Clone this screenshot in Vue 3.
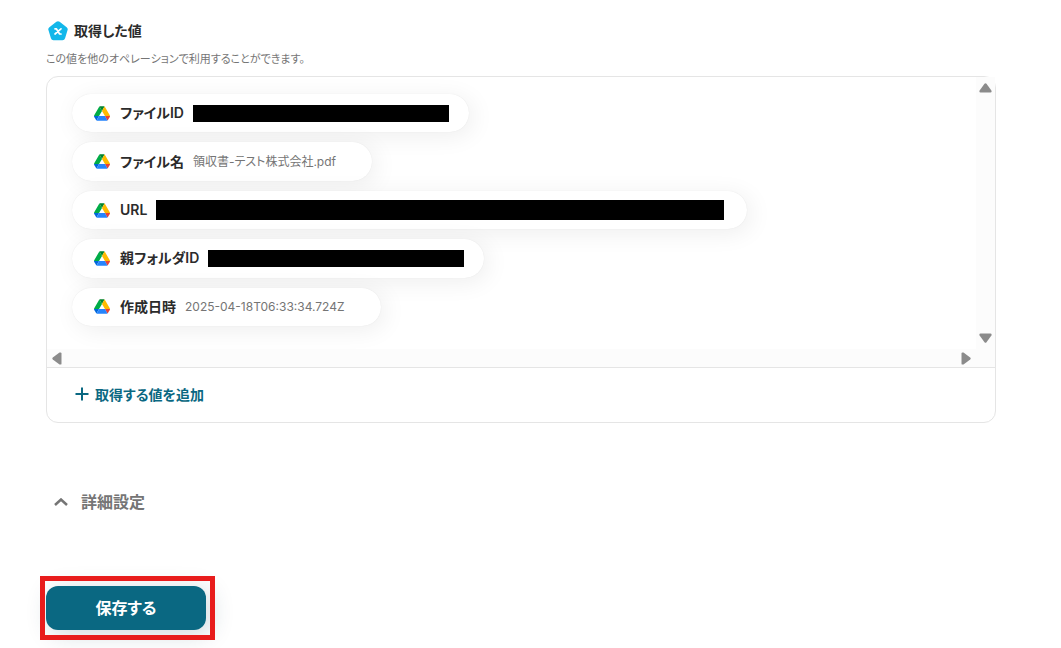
<script setup>
const items = [
  { label: 'ファイルID', size: 'file' },
  { label: 'ファイル名', value: '領収書-テスト株式会社.pdf' },
  { label: 'URL', size: 'url' },
  { label: '親フォルダID', size: 'folder' },
  { label: '作成日時', value: '2025-04-18T06:33:34.724Z' },
]
</script>

<template>
  <main class="page">
    <header class="heading">
      <svg class="badge" viewBox="0 0 20 20" aria-hidden="true">
        <path d="M10 3 17 8.300 14.500 16.500H5.500L3 8.300Z" fill="#12b7ea" stroke="#12b7ea" stroke-width="5.400" stroke-linejoin="round" />
        <path d="M7 7.800H8.300L11.600 13H13M13 7.800 7 13" fill="none" stroke="#fff" stroke-width="1.700" stroke-linecap="round" stroke-linejoin="round" />
      </svg>
      <h2>取得した値</h2>
    </header>
    <p class="note">この値を他のオペレーションで利用することができます。</p>

    <section class="card">
      <div class="scroller">
        <ul class="items">
          <li v-for="item in items" :key="item.label" class="pill">
            <svg class="drive" viewBox="0 0 87.3 78" aria-hidden="true">
              <path d="m6.600 66.850 3.850 6.650c.8 1.400 1.950 2.500 3.300 3.300l13.750-23.800H0c0 1.550.4 3.100 1.200 4.500z" fill="#0066da" />
              <path d="m43.650 25-13.750-23.800c-1.350.8-2.500 1.900-3.300 3.300L1.200 48.500A9.060 9.060 0 0 0 0 53h27.500z" fill="#00ac47" />
              <path d="M73.550 76.800c1.350-.8 2.500-1.900 3.300-3.300l1.600-2.750 7.650-13.250c.8-1.400 1.200-2.950 1.200-4.500H59.800l5.850 11.500z" fill="#ea4335" />
              <path d="M43.650 25 57.400 1.200C56.050.4 54.500 0 52.900 0H34.400c-1.600 0-3.150.45-4.500 1.200z" fill="#00832d" />
              <path d="M59.800 53H27.500L13.750 76.800c1.350.8 2.900 1.200 4.500 1.200h50.800c1.600 0 3.150-.45 4.500-1.200z" fill="#2684fc" />
              <path d="m73.400 26.500-12.700-22c-.8-1.400-1.950-2.500-3.300-3.300L43.650 25 59.800 53h27.450c0-1.550-.4-3.100-1.200-4.500z" fill="#ffba00" />
            </svg>
            <span class="label">{{ item.label }}</span>
            <span v-if="item.value" class="value">{{ item.value }}</span>
            <span v-else class="mask" :class="item.size"></span>
          </li>
        </ul>
        <div class="bar vertical">
          <svg viewBox="0 0 13 10" aria-hidden="true"><path d="M5.500.8.600 7.500Q-.1 9.500 1.600 9.500H11.400Q13.100 9.500 12.400 7.500L7.500.8Q6.500-.2 5.500.8Z" /></svg>
          <svg viewBox="0 0 13 10" aria-hidden="true"><path d="M5.500 9.200.600 2.500Q-.1.500 1.600.5H11.400Q13.100.5 12.400 2.500L7.500 9.200Q6.500 10.200 5.500 9.200Z" /></svg>
        </div>
        <div class="bar horizontal">
          <svg viewBox="0 0 10 13" aria-hidden="true"><path d="M.8 5.500 7.500.600Q9.500-.1 9.500 1.600V11.400Q9.500 13.100 7.500 12.400L.8 7.500Q-.2 6.500.8 5.500Z" /></svg>
          <svg viewBox="0 0 10 13" aria-hidden="true"><path d="M9.200 5.500 2.500.600Q.5-.1.5 1.600V11.400Q.5 13.100 2.500 12.400L9.200 7.500Q10.200 6.500 9.200 5.500Z" /></svg>
        </div>
        <div class="bar"></div>
      </div>
      <footer class="footer">
        <button type="button" class="add">
          <svg viewBox="0 0 14 14" aria-hidden="true"><path d="M7 .5V13.500M.5 7H13.500" /></svg>
          取得する値を追加
        </button>
      </footer>
    </section>

    <button type="button" class="advanced">
      <svg viewBox="0 0 14 8" aria-hidden="true"><path d="M1 7 7 1.500 13 7" /></svg>
      詳細設定
    </button>

    <div class="actions">
      <button type="button" class="save">保存する</button>
    </div>
  </main>
</template>

<style>
body {
  background: #fff;
}
</style>

<style scoped>
.page {
  padding: 20px 65px 18px 46px;
  font-family: Inter, "Noto Sans CJK JP", sans-serif;
  font-feature-settings: "palt";
  color: #2b2b2b;
}
.heading {
  display: flex;
  align-items: center;
  gap: 6px;
  height: 22px;
  padding-left: 2px;
}
.badge {
  width: 20px;
  height: 20px;
}
h2 {
  margin: 0;
  font-size: 14px;
  line-height: 22px;
  font-weight: 600;
}
.note {
  margin: 8px 0;
  font-size: 11px;
  line-height: 18px;
  color: #757575;
}
.card {
  border: 1px solid #e5e5e5;
  border-radius: 12px;
}
.scroller {
  display: grid;
  grid-template-columns: 1fr 19px;
  grid-template-rows: auto 18px;
  border-bottom: 1px solid #e5e5e5;
}
.items {
  display: flex;
  flex-direction: column;
  align-items: flex-start;
  gap: 10px;
  min-width: 0;
  min-height: 232px;
  margin: 0;
  padding: 17px 25px 23px;
  list-style: none;
}
.pill {
  display: flex;
  flex: 1;
  align-items: center;
  padding: 0 28px 0 22px;
  border-radius: 20px;
  background: #fff;
  box-shadow: 4px 4px 24px rgba(0, 0, 0, 0.07), 0 0 1px rgba(0, 0, 0, 0.1);
}
.drive {
  width: 16px;
  height: 15px;
  margin-right: 10px;
}
.label {
  margin-right: 9px;
  font-size: 14px;
  line-height: 20px;
  font-weight: 600;
}
.value {
  padding-right: 8px;
  font-size: 12px;
  line-height: 20px;
  color: #757575;
}
.mask {
  height: 17px;
  background: #000;
}
.mask.file,
.mask.folder {
  width: 256px;
  margin-right: -8px;
}
.mask.url {
  width: 568px;
  height: 20px;
  margin-right: -5px;
}
.bar {
  display: flex;
  justify-content: space-between;
  background: #fcfcfc;
}
.bar svg {
  fill: #8b8b8b;
}
.vertical {
  flex-direction: column;
  align-items: center;
  padding: 6px 0;
}
.vertical svg {
  width: 13px;
  height: 10px;
}
.horizontal {
  align-items: center;
  padding: 0 5px;
}
.horizontal svg {
  width: 10px;
  height: 13px;
}
button {
  font: inherit;
  font-feature-settings: inherit;
  border: 0;
  background: none;
  cursor: pointer;
}
.footer {
  padding: 11px 28px 13px;
}
.add {
  display: flex;
  align-items: center;
  gap: 6px;
  height: 30px;
  padding: 0;
  font-size: 14px;
  font-weight: 600;
  color: #0a6882;
}
.add svg {
  width: 14px;
  height: 14px;
  fill: none;
  stroke: currentColor;
  stroke-width: 2;
}
.advanced {
  display: flex;
  align-items: center;
  gap: 13px;
  margin: 67px 0 72px;
  padding: 0 8px;
  font-size: 16px;
  line-height: 24px;
  font-weight: 600;
  color: #757575;
}
.advanced svg {
  width: 14px;
  height: 8px;
  fill: none;
  stroke: currentColor;
  stroke-width: 2.5;
}
.actions {
  position: relative;
  width: 160px;
}
.actions::after {
  content: "";
  position: absolute;
  inset: -10px -9px -10px -6px;
  border: 5px solid #e81c1c;
  pointer-events: none;
}
.save {
  display: block;
  width: 100%;
  height: 44px;
  padding: 0 0 2px;
  border-radius: 12px;
  background: #0a6882;
  box-shadow: 4px 4px 24px rgba(10, 60, 80, 0.2);
  font-size: 16px;
  font-weight: 700;
  color: #fff;
}
</style>
